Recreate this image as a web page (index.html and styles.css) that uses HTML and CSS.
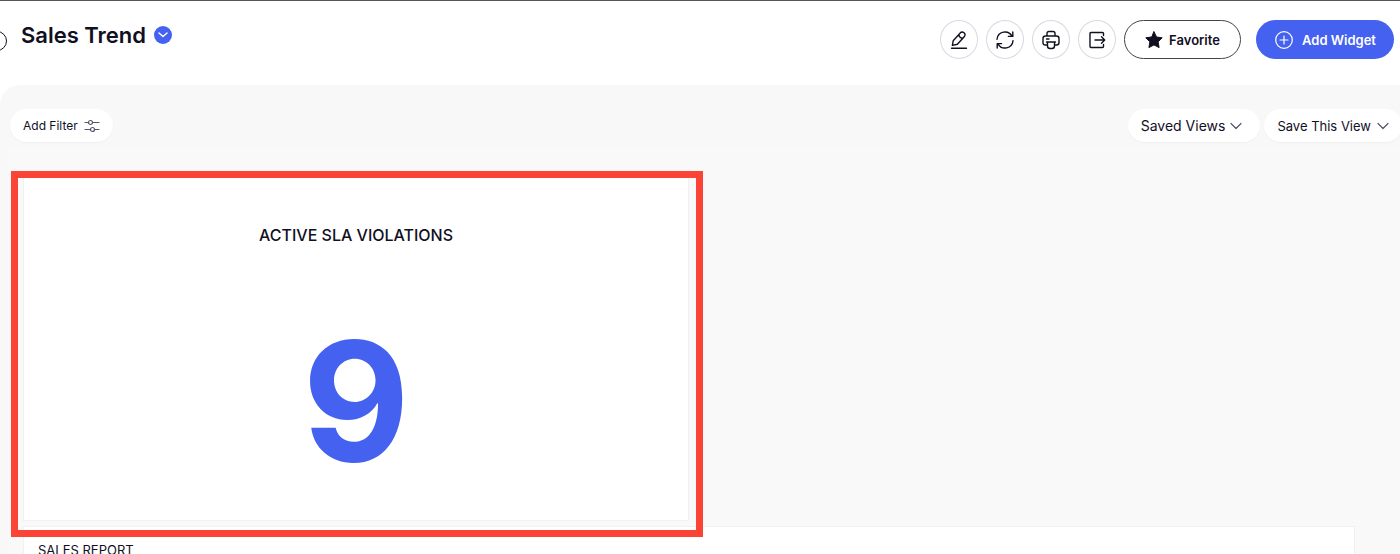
FILE: index.html
```html
<!DOCTYPE html>
<html lang="en">
  <head>
    <meta charset="utf-8">
    <title>Sales Trend</title>
    <link rel="stylesheet" href="styles.css">
  </head>
  <body>
    <header class="header">
      <button class="collapse" aria-label="Toggle sidebar"></button>
      <div class="title">
        <h1>Sales Trend</h1>
        <button class="title-menu" aria-label="Switch dashboard">
          <svg width="10" height="6" viewBox="0 0 10 6"><path d="M1 1l4 3.6L9 1"/></svg>
        </button>
      </div>
      <div class="actions">
        <button class="icon-btn" aria-label="Edit">
          <svg width="20" height="20" viewBox="0 0 20 20"><path d="M3.400 15.400l.8-4.600 6.800-7.600c1.200-1.400 2.700-1.500 4-.4s1.400 2.500.2 3.900l-6.800 7.600zM9.800 4.800c.4 2 1.700 3.200 3.700 3.500M2.500 18.300h15"/></svg>
        </button>
        <button class="icon-btn" aria-label="Refresh">
          <svg width="20" height="20" viewBox="0 0 20 20"><path d="M2 9.200A8 8 0 0 1 17 6.200M18 10.800A8 8 0 0 1 3 13.800M17.800 2v4.400h-4.400M2.200 18v-4.400h4.400"/></svg>
        </button>
        <button class="icon-btn" aria-label="Print">
          <svg width="20" height="20" viewBox="0 0 20 20"><path d="M6 6V3.500Q6 1.500 8 1.500h4q2 0 2 2V6M6.500 15H4.500Q2 15 2 12.500v-4Q2 6 4.500 6h11Q18 6 18 8.500v4Q18 15 15.500 15h-2M5.500 12h9M6.500 12v4q0 2.500 2.500 2.500h2q2.500 0 2.500-2.500v-4M5.500 9h2.500"/></svg>
        </button>
        <button class="icon-btn" aria-label="Export">
          <svg width="20" height="20" viewBox="0 0 20 20"><path d="M16.500 5.500V3.500Q16.500 2.500 15.500 2.500H4Q3 2.500 3 3.500v13q0 1 1 1h11.500q1 0 1-1V14.500M8 10h9.500M14.500 6.800l3.200 3.200-3.200 3.200"/></svg>
        </button>
        <button class="btn favorite">
          <svg width="18" height="18" viewBox="0 0 18 18"><path d="M9 .8l2.500 5.200 5.700.8-4.100 4 1 5.800L9 13.900l-5.100 2.700 1-5.800-4.100-4 5.700-.8z"/></svg>
          Favorite
        </button>
        <button class="btn add-widget">
          <svg width="20" height="20" viewBox="0 0 20 20"><circle cx="10" cy="10" r="8.300"/><path d="M10 6v8M6 10h8"/></svg>
          Add Widget
        </button>
      </div>
    </header>

    <main class="panel">
      <div class="toolbar">
        <button class="pill filter">
          Add Filter
          <svg width="16" height="14" viewBox="0 0 16 14"><path d="M1 3.500h3.500M8.500 3.500H15M1 10.500h5.500M10.500 10.500H15"/><circle cx="6.500" cy="3.500" r="2"/><circle cx="8.500" cy="10.500" r="2"/></svg>
        </button>
        <div class="views">
          <button class="pill saved">
            Saved Views
            <svg width="12" height="8" viewBox="0 0 12 8"><path d="M1 1.500l5 5 5-5"/></svg>
          </button>
          <button class="pill">
            Save This View
            <svg width="12" height="8" viewBox="0 0 12 8"><path d="M1 1.500l5 5 5-5"/></svg>
          </button>
        </div>
      </div>

      <div class="board">
        <section class="card metric">
          <h2>ACTIVE SLA VIOLATIONS</h2>
          <p class="value">9</p>
          <div class="highlight"></div>
        </section>
        <section class="card report">
          <h2>SALES REPORT</h2>
        </section>
      </div>
    </main>
  </body>
</html>
```
FILE: styles.css
```css
* {
  box-sizing: border-box;
}

body {
  margin: 0;
  height: 100vh;
  display: flex;
  flex-direction: column;
  overflow: hidden;
  border-top: 1px solid #55555a;
  background: #fff;
  color: #10101f;
  font-family: Inter, "Liberation Sans", sans-serif;
}

h1,
h2,
p {
  margin: 0;
}

button {
  font: inherit;
  color: inherit;
  padding: 0;
  cursor: pointer;
}

svg {
  flex: none;
  fill: none;
  stroke: currentColor;
  stroke-width: 1.4;
  stroke-linecap: round;
  stroke-linejoin: round;
}

/* Header */
.header {
  position: relative;
  flex: none;
  display: flex;
  justify-content: space-between;
  height: 84px;
  padding: 19px 6px 0 21px;
}

.collapse {
  position: absolute;
  left: -13px;
  top: 30px;
  width: 20px;
  height: 20px;
  border: 1px solid #10101f;
  border-radius: 50%;
  background: #fff;
}

.title {
  display: flex;
  align-items: center;
  gap: 8px;
  height: 30px;
}

.title h1 {
  font-size: 22px;
  font-weight: 600;
  line-height: 30px;
}

.title-menu {
  display: flex;
  align-items: center;
  justify-content: center;
  width: 18px;
  height: 18px;
  border: none;
  border-radius: 50%;
  background: #4461f0;
  color: #fff;
}

.actions {
  display: flex;
  gap: 8px;
}

.icon-btn {
  display: flex;
  align-items: center;
  justify-content: center;
  width: 38px;
  height: 39px;
  border: 1px solid #d9d9e3;
  border-radius: 50%;
  background: #fff;
}

.btn {
  display: flex;
  align-items: center;
  justify-content: center;
  height: 39px;
  border-radius: 20px;
  font-size: 13px;
  font-weight: 600;
}

.favorite {
  gap: 6px;
  width: 117px;
  border: 1px solid #44444f;
  background: #fff;
}

.favorite svg {
  fill: currentColor;
  stroke-width: 1;
}

.add-widget {
  gap: 8px;
  width: 138px;
  margin-left: 7px;
  border: none;
  background: #4461f0;
  color: #fff;
}

.add-widget svg {
  stroke-width: 1.2;
}

/* Panel */
.panel {
  flex: 1;
  min-height: 0;
  display: flex;
  flex-direction: column;
  border-top-left-radius: 20px;
  background: #f8f8f8;
}

.toolbar {
  display: flex;
  justify-content: space-between;
  margin-right: -2px;
  padding: 24px 0 6px 10px;
}

.pill {
  display: flex;
  align-items: center;
  gap: 6px;
  height: 33px;
  padding: 0 13px;
  border: none;
  border-radius: 17px;
  background: #fff;
  box-shadow: 0 1px 1px #f0f0f0;
  font-size: 13px;
  white-space: nowrap;
}

.pill svg {
  color: #55556a;
  stroke-width: 1.2;
}

.filter {
  font-size: 12px;
}

.views {
  display: flex;
  gap: 4px;
}

.saved {
  gap: 5px;
  padding: 0 18px 0 13px;
  font-size: 14px;
}

/* Widgets */
.board {
  flex: 1;
  min-height: 0;
  overflow: hidden;
  display: grid;
  grid-template-columns: 1fr 1fr;
  grid-template-rows: auto 1fr;
  gap: 5px 0;
  margin-left: 8px;
  padding: 26px 45px 0 15px;
  background: #f9f9f9;
}

.card {
  border: 1px solid #f1f1f1;
  background: #fff;
}

.metric {
  position: relative;
  height: 347px;
  padding-top: 50px;
  text-align: center;
}

.metric h2 {
  font-size: 16px;
  font-weight: 500;
  line-height: 20px;
}

.value {
  margin-top: 56px;
  color: #4461f0;
  font-size: 165px;
  font-weight: 700;
  line-height: 200px;
}

/* red frame drawn over the selected widget */
.highlight {
  position: absolute;
  inset: -4px -15px -17px -13px;
  border: 7px solid #fb4336;
}

.report {
  grid-column: 1 / -1;
  border-bottom: none;
  padding: 15px 14px 0;
}

.report h2 {
  font-size: 13px;
  font-weight: 400;
  line-height: 16px;
}
```
